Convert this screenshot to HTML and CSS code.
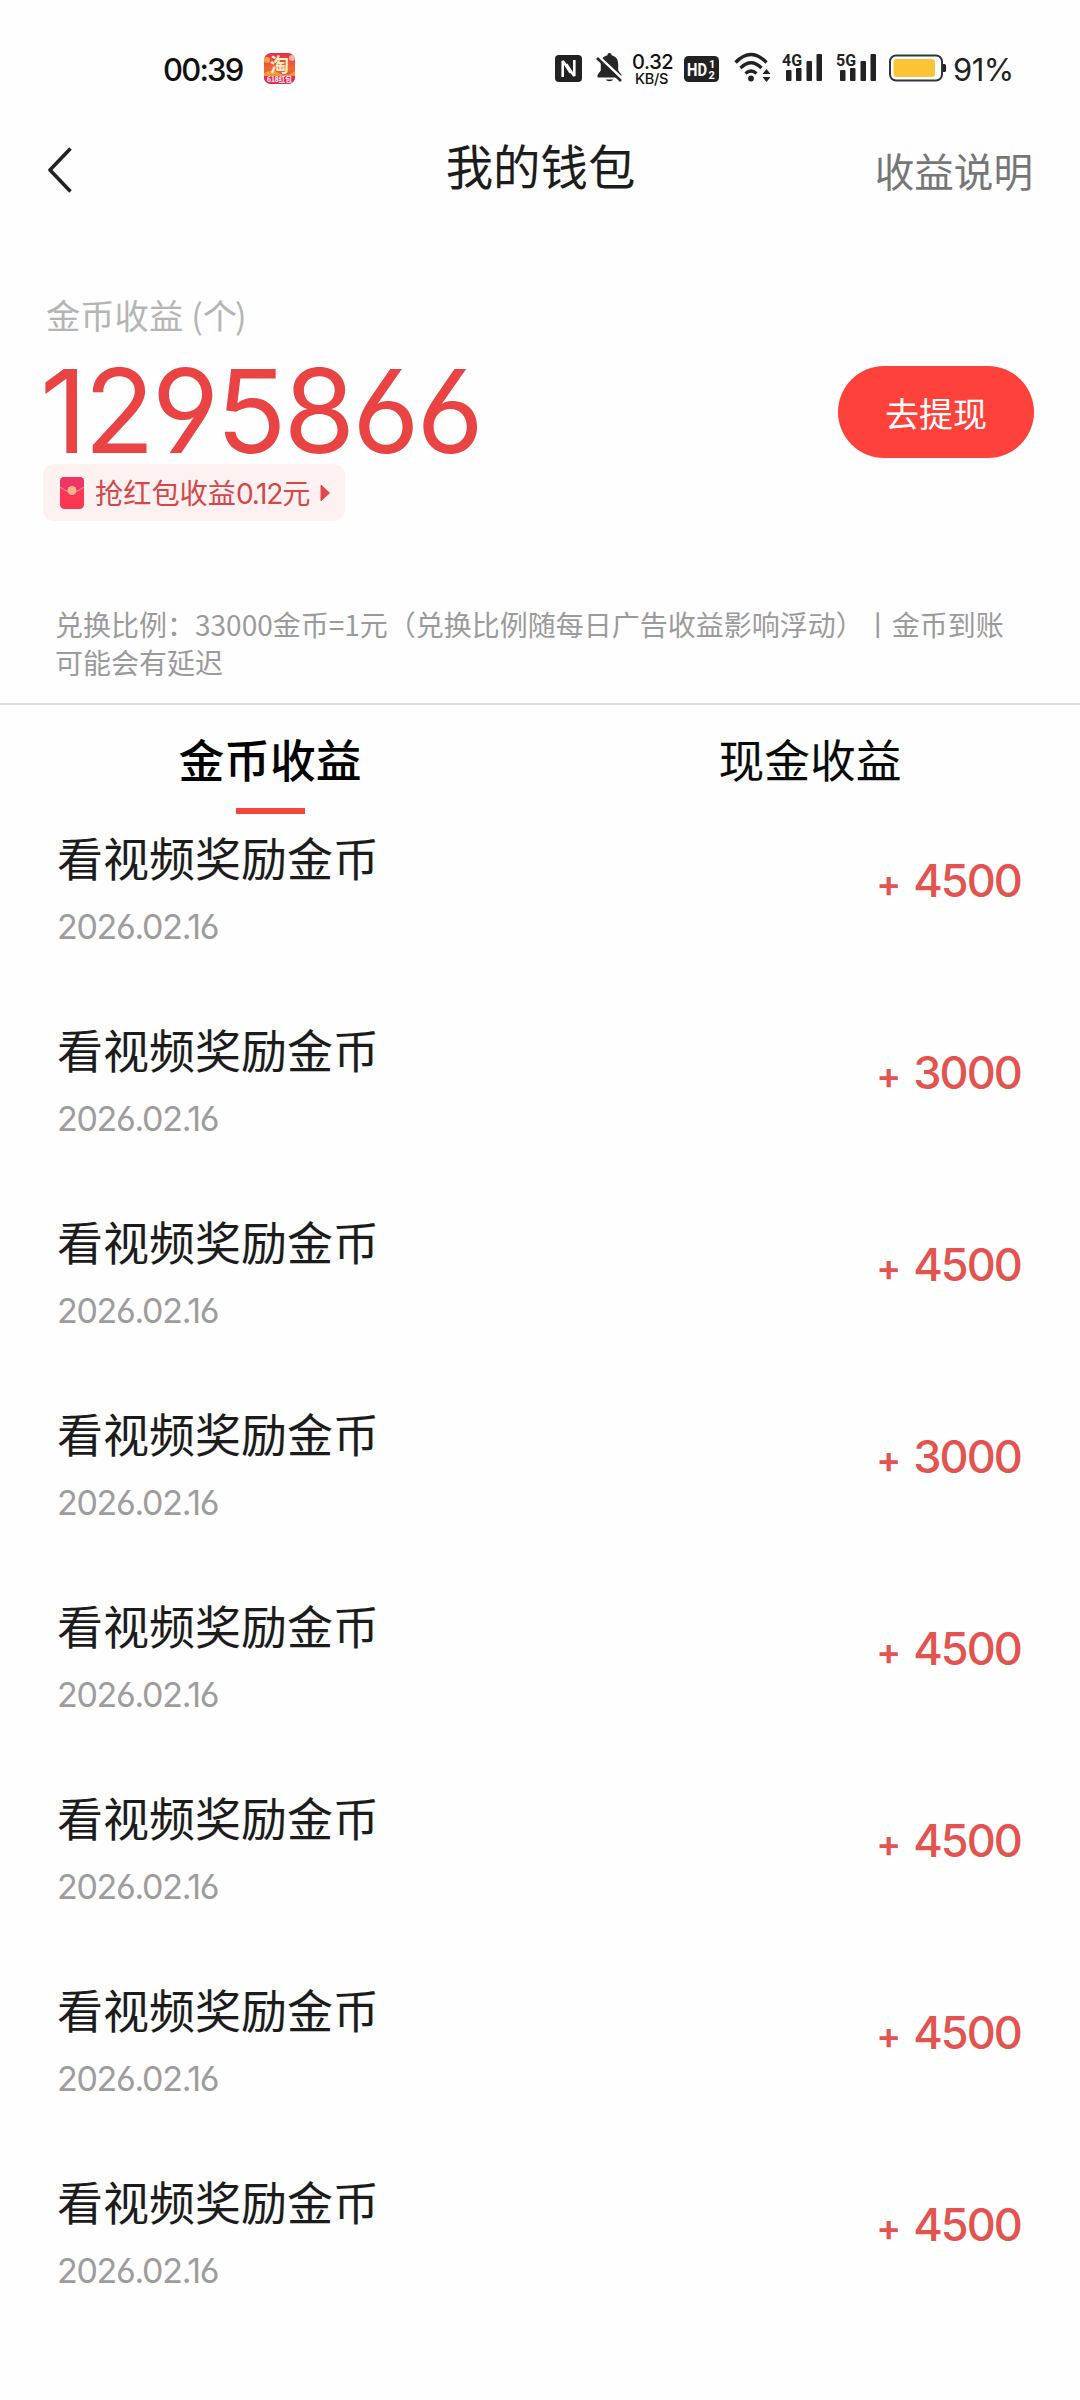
FILE: index.html
```html
<!DOCTYPE html>
<html lang="zh-CN">
<head>
<meta charset="utf-8">
<title>我的钱包</title>
<link rel="stylesheet" href="styles.css">
</head>
<body>
<div class="status">
  <span class="clock">00:39</span>
  <svg class="app" width="31" height="31" viewBox="0 0 31 31">
    <defs>
      <linearGradient id="tb" x1="0" y1="0" x2="0" y2="1"><stop offset="0" stop-color="#e2304a"/><stop offset=".5" stop-color="#ee6a2f"/><stop offset=".72" stop-color="#e8503a"/><stop offset=".76" stop-color="#e8194e"/><stop offset="1" stop-color="#ee2e55"/></linearGradient>
      <clipPath id="tbc"><rect width="31" height="31" rx="7"/></clipPath>
    </defs>
    <g clip-path="url(#tbc)">
      <rect width="31" height="31" fill="url(#tb)"/>
      <circle cx="3" cy="7" r="3" fill="#f6a04a"/><circle cx="28" cy="5" r="3" fill="#f7b3a0"/>
      <path d="M0 20Q8 15 15 20T31 18V23H0Z" fill="#f59a35"/>
      <rect y="23" width="31" height="8" fill="#e9285a"/>
    </g>
    <text class="app-glyph" x="15.5" y="19" text-anchor="middle">淘</text>
    <text class="app-label" x="15.5" y="29" text-anchor="middle" textLength="25" lengthAdjust="spacingAndGlyphs">618红包</text>
  </svg>
  <svg class="nfc" width="27" height="27" viewBox="0 0 27 27"><rect width="27" height="27" rx="4" fill="#222"/><path d="M7.700 22V6L19.300 21V5" fill="none" stroke="#fff" stroke-width="2.600" stroke-linejoin="bevel"/><path d="M11 9.500L16 17.500" stroke="#fff" stroke-width="3.500"/><path d="M11.500 17v4M15.500 6v4" stroke="#222" stroke-width="1.500"/></svg>
  <svg class="bell" width="27" height="30" viewBox="0 0 27 30"><path d="M13.500 0c1.300 0 2 .8 2 2.200 4.500 1 6.700 4.300 6.700 8.800v6.500l3.300 4.500v2.500H1.500V22l3.300-4.500V11c0-4.500 2.200-7.800 6.700-8.800 0-1.400.7-2.200 2-2.200ZM10 26.500h7c-.5 2.300-6.500 2.300-7 0Z" fill="#262626"/><path d="M2.500 3.500L27 26.500" stroke="#fff" stroke-width="3"/><path d="M1 5L25 28" stroke="#262626" stroke-width="2.600"/></svg>
  <div class="speed"><span class="rate">0.32</span><span class="unit">KB/S</span></div>
  <svg class="hd" width="35" height="26" viewBox="0 0 35 26"><rect width="35" height="26" rx="4.500" fill="#222"/><text class="hd-main" x="3" y="19.500" textLength="20" lengthAdjust="spacingAndGlyphs">HD</text><text class="hd-sub" x="25" y="12">1</text><text class="hd-sub" x="24.500" y="22.500">2</text></svg>
  <svg class="wifi" width="38" height="31" viewBox="0 0 38 31"><g fill="none" stroke="#222" stroke-width="3.300"><path d="M1.500 10.500Q17 -5.500 32.500 10.500"/><path d="M6.500 16Q17 5.500 27.500 16"/><path d="M11.500 21.500Q17 16.500 22.500 21.500"/></g><circle cx="17" cy="26.500" r="2.900" fill="#222"/><path d="M32.500 17l4 5h-8zM32.500 30l4-5h-8z" fill="#222"/></svg>
  <svg class="signal" width="41" height="31" viewBox="0 0 41 31"><g fill="#222"><rect x="4" y="18" width="5.500" height="11" rx="1"/><rect x="14" y="16" width="5.500" height="13" rx="1"/><rect x="24.500" y="9" width="5.500" height="20" rx="1"/><rect x="34.500" y="2" width="5.500" height="27" rx="1"/></g><text class="net" x="0" y="13.500" textLength="20" lengthAdjust="spacingAndGlyphs">4G</text></svg>
  <svg class="signal" width="41" height="31" viewBox="0 0 41 31"><g fill="#222"><rect x="4" y="18" width="5.500" height="11" rx="1"/><rect x="14" y="16" width="5.500" height="13" rx="1"/><rect x="24.500" y="9" width="5.500" height="20" rx="1"/><rect x="34.500" y="2" width="5.500" height="27" rx="1"/></g><text class="net" x="0" y="13.500" textLength="20" lengthAdjust="spacingAndGlyphs">5G</text></svg>
  <svg class="battery" width="57" height="28" viewBox="0 0 57 28"><rect x="1" y="1.500" width="52" height="25" rx="6" fill="#fff" stroke="#30363c" stroke-width="2"/><rect x="4.500" y="5" width="41.500" height="18" rx="3" fill="#fbc336"/><path d="M54 10h1.500q1.500 0 1.500 1.500v5q0 1.500-1.500 1.500H54z" fill="#222"/></svg>
  <span class="percent">91%</span>
</div>

<header class="nav">
  <svg class="back" width="24" height="46" viewBox="0 0 24 46"><path d="M22.500 1.500L2 23L22.500 44.500" fill="none" stroke="#222" stroke-width="3.600" stroke-linejoin="round"/></svg>
  <h1 class="title">我的钱包</h1>
  <a class="explain">收益说明</a>
</header>

<section class="balance">
  <div class="figures">
    <div class="caption">金币收益<span class="paren">(</span>个<span class="paren-end">)</span></div>
    <div class="total">1295866</div>
    <div class="bonus">
      <svg width="24" height="32" viewBox="0 0 24 32"><defs><linearGradient id="env" x1="0" y1="0" x2="0" y2="1"><stop offset="0" stop-color="#f93a62"/><stop offset="1" stop-color="#fb3550"/></linearGradient></defs><rect width="24" height="32" rx="4.500" fill="url(#env)"/><path d="M0 10Q12 20 24 10V5Q24 0 19.500 0H4.500Q0 0 0 5Z" fill="#ee3563"/><path d="M0 10Q12 20 24 10" fill="none" stroke="#ff93a4" stroke-width="1"/><circle cx="12" cy="13.500" r="4.500" fill="#f9b58a"/></svg>
      <span class="bonus-text">抢红包收益<span class="bonus-num">0.12</span>元</span>
      <svg width="10" height="18" viewBox="0 0 10 18"><path d="M1 1L9.500 9L1 17Z" fill="#e0474a" stroke="#e0474a" stroke-linejoin="round"/></svg>
    </div>
  </div>
  <button class="withdraw">去提现</button>
</section>

<p class="notice">兑换比例：<span class="notice-num">33000</span>金币=1元（兑换比例随每日广告收益影响浮动）<span class="bar">丨</span>金币到账<br>可能会有延迟</p>

<nav class="tabs">
  <div class="tab active">金币收益</div>
  <div class="tab">现金收益</div>
</nav>

<ul class="records">
  <li class="record"><div><div class="name">看视频奖励金币</div><div class="date">2026.02.16</div></div><div class="amount"><span class="plus">+</span>4500</div></li>
  <li class="record"><div><div class="name">看视频奖励金币</div><div class="date">2026.02.16</div></div><div class="amount"><span class="plus">+</span>3000</div></li>
  <li class="record"><div><div class="name">看视频奖励金币</div><div class="date">2026.02.16</div></div><div class="amount"><span class="plus">+</span>4500</div></li>
  <li class="record"><div><div class="name">看视频奖励金币</div><div class="date">2026.02.16</div></div><div class="amount"><span class="plus">+</span>3000</div></li>
  <li class="record"><div><div class="name">看视频奖励金币</div><div class="date">2026.02.16</div></div><div class="amount"><span class="plus">+</span>4500</div></li>
  <li class="record"><div><div class="name">看视频奖励金币</div><div class="date">2026.02.16</div></div><div class="amount"><span class="plus">+</span>4500</div></li>
  <li class="record"><div><div class="name">看视频奖励金币</div><div class="date">2026.02.16</div></div><div class="amount"><span class="plus">+</span>4500</div></li>
  <li class="record"><div><div class="name">看视频奖励金币</div><div class="date">2026.02.16</div></div><div class="amount"><span class="plus">+</span>4500</div></li>
</ul>
</body>
</html>
```
FILE: styles.css
```css
* { box-sizing: border-box; margin: 0; padding: 0; }
body {
  width: 1080px;
  height: 2400px;
  overflow: hidden;
  background: #fefefe;
  color: #1c1c1c;
  font-family: "Noto Sans CJK SC", sans-serif;
}
svg { display: block; flex: none; }

/* Status bar */
.status {
  height: 120px;
  padding: 52px 0 0 163px;
  display: flex;
  align-items: flex-start;
  font-family: Inter, sans-serif;
  color: #111;
}
.clock, .percent { line-height: 36px; white-space: nowrap; flex: none; }
.clock { width: 101px; font-size: 31px; font-weight: 500; letter-spacing: -1.800px; }
.percent { margin-left: 7px; font-size: 31px; letter-spacing: -0.500px; color: #222; }
.app { margin: 1px 260px 0 0; }
.app-glyph { font: 700 19px "Noto Sans CJK SC", sans-serif; fill: #ffefc8; }
.app-label { font: 700 7px "Noto Sans CJK SC", sans-serif; fill: #fff; }
.nfc { margin: 3px 14px 0 0; }
.bell { margin: 1px 9px 0 0; }
.speed { width: 52px; display: flex; flex-direction: column; }
.rate { font-size: 20px; line-height: 20px; font-weight: 500; letter-spacing: -0.4px; }
.unit { padding-left: 3px; font-size: 14.500px; line-height: 14px; font-weight: 500; letter-spacing: -0.3px; }
.hd { margin: 4px 15px 0 0; }
.hd-main { font: 700 18px Roboto, sans-serif; fill: #fff; }
.hd-sub { font: 700 11px Roboto, sans-serif; fill: #fff; }
.wifi { margin-right: 10px; }
.signal { margin-right: 12.500px; }
.net { font: 700 17px Roboto, sans-serif; fill: #222; stroke: #fefefe; stroke-width: 2px; paint-order: stroke; }
.battery { margin-top: 2px; }

/* Title bar */
.nav {
  height: 100px;
  padding: 0 47px 0 48px;
  display: grid;
  grid-template-columns: 1fr auto 1fr;
  align-items: center;
}
.title { font-size: 47.400px; line-height: 60px; font-weight: 400; margin-top: -11px; }
.explain { justify-self: end; font-size: 39.600px; line-height: 60px; color: #767676; margin-top: -1px; }

/* Balance */
.balance {
  height: 360px;
  padding: 70px 46px 0 43px;
  display: flex;
  justify-content: space-between;
}
.caption { padding-left: 3px; font-size: 34.300px; line-height: 48px; color: #b5b5b5; white-space: nowrap; }
.paren { margin-left: 8px; }
.paren-end { margin-left: -2px; }
.total {
  margin-left: -3px;
  padding-top: 20px;
  font-family: Inter, sans-serif;
  font-feature-settings: "ss01";
  font-size: 116px;
  line-height: 106px;
  letter-spacing: -3.100px;
  color: #e94344;
}
.bonus {
  width: 302px;
  height: 57px;
  padding-left: 17px;
  display: flex;
  align-items: center;
  border-radius: 11px;
  background: #fef1f1;
  color: #d5474a;
}
.bonus-text { width: 225px; margin-left: 11px; padding-top: 1px; font-size: 28.200px; line-height: 40px; white-space: nowrap; }
.bonus-num { font-family: Inter, sans-serif; letter-spacing: -1.300px; }
.withdraw {
  width: 196px;
  height: 92px;
  margin-top: 76px;
  padding-top: 2px;
  border: 0;
  border-radius: 46px;
  background: #ff413b;
  color: #fff;
  font: 400 34px/48px "Noto Sans CJK SC", sans-serif;
}

/* Notice */
.notice {
  height: 125px;
  padding: 25px 0 0 55px;
  border-bottom: 2px solid #dcdfdd;
  font-size: 28px;
  line-height: 38px;
  color: #9b9b9b;
  white-space: nowrap;
}

/* Tabs */
.tabs { height: 109px; display: grid; grid-template-columns: 1fr 1fr; }
.tab {
  display: flex;
  flex-direction: column;
  align-items: center;
  padding-top: 18px;
  font-size: 45.800px;
  line-height: 70px;
  color: #0a0a0a;
}
.active { font-weight: 500; color: #000; }
.active::after { content: ""; width: 69px; height: 6px; margin-top: 15px; background: #f4463c; }

/* Records */
.records { list-style: none; padding: 8px 59px 0 57px; }
.record { height: 192px; display: flex; justify-content: space-between; }
.name { font-size: 46px; line-height: 68px; }
.date {
  margin-top: 17px;
  font-family: Inter, sans-serif;
  font-feature-settings: "ss01";
  font-size: 34px;
  line-height: 40px;
  letter-spacing: -1.300px;
  font-weight: 400;
  color: #9d9d9d;
}
.amount {
  display: flex;
  align-items: baseline;
  height: 56px;
  margin-top: 31px;
  font-family: Inter, sans-serif;
  font-size: 45px;
  line-height: 56px;
  font-weight: 500;
  letter-spacing: -1.900px;
  color: #e35350;
}
.plus { margin-right: 14px; font-size: 37px; font-weight: 600; }
```
